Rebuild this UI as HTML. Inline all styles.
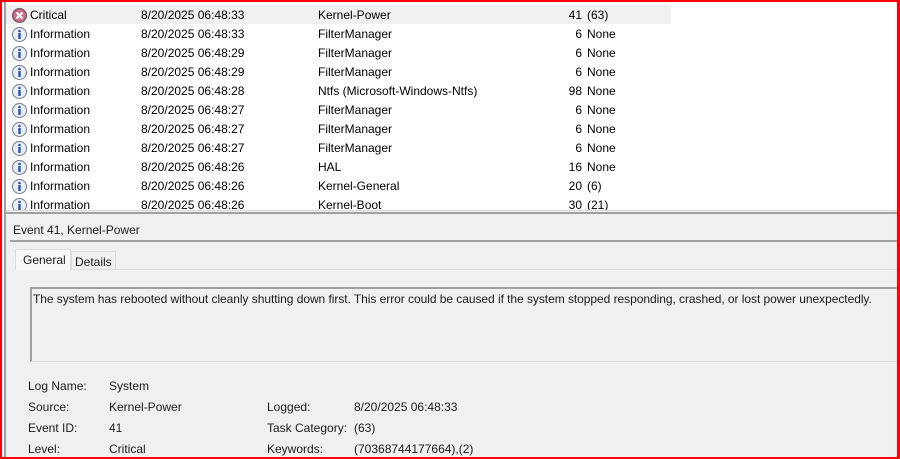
<!DOCTYPE html>
<html><head><style>
*{margin:0;padding:0;box-sizing:border-box}
body{width:900px;height:459px;overflow:hidden;background:#fff;font-family:"Liberation Sans",sans-serif;font-size:12px;color:#000;position:relative}
.frame{position:absolute;left:0;top:0;width:900px;height:459px;border:2px solid #f00;border-right-width:3px;z-index:10;pointer-events:none}
.vl{position:absolute;left:4px;top:0;width:2px;height:459px;background:#a0a0a0}
.list{position:absolute;left:6px;top:2px;width:891px;height:208px;background:#fff;overflow:hidden}
.row{position:absolute;left:0;height:19px;width:665px;line-height:19px;white-space:nowrap}
.row.sel{background:#f0f0f0}
.row span{position:absolute;top:0}
.ic{position:absolute;left:6px;top:2px;width:15px;height:15px}
.bot{position:absolute;left:6px;top:210px;width:894px;height:247px;background:#f0f0f0;border-top:1px solid #d8d8d8}
.bot:before{content:"";position:absolute;left:0;top:1px;width:100%;height:2px;background:#a0a0a0}
.ab{position:absolute;white-space:nowrap;color:#1a1a1a}
</style></head><body>
<div class="vl"></div>
<div class="list">
<div class="row sel" style="top:3px;line-height:21px"><svg class="ic" viewBox="0 0 15 15" style="top:3px"><circle cx="7.5" cy="7.5" r="7" fill="#b85a78" stroke="#6d5a6a"/><circle cx="7.5" cy="7.5" r="5.5" fill="#c9768e"/><path d="M4.5 4.5l6 6M10.5 4.5l-6 6" stroke="#fff" stroke-width="2"/></svg><span style="left:24px">Critical</span><span style="left:135px">8/20/2025 06:48:33</span><span style="left:312px">Kernel-Power</span><span style="left:555px;width:21px;text-align:right">41</span><span style="left:581px">(63)</span></div>
</div>
<div class="bot">
<div class="ab" style="left:7px;top:12px">Event 41, Kernel-Power</div>
<div style="position:absolute;left:4px;top:29px;width:890px;height:2px;background:#a0a0a0"></div>
<div style="position:absolute;left:10px;top:58px;width:884px;height:1px;background:#dcdcdc"></div>
<div style="position:absolute;left:9px;top:38px;width:56px;height:21px;background:#f8f8f8;border:1px solid #dcdcdc;border-bottom:none"></div>
<div class="ab" style="left:17px;top:42px">General</div>
<div style="position:absolute;left:65px;top:40px;width:45px;height:19px;border:1px solid #dcdcdc;border-bottom:none"></div>
<div class="ab" style="left:69px;top:44px">Details</div>
<div style="position:absolute;left:24px;top:76px;width:870px;height:75px;border-top:2px solid #a0a0a0;border-left:2px solid #a0a0a0;border-bottom:1px solid #dcdcdc"></div>
<div class="ab" style="left:27px;top:81px;letter-spacing:-0.05px">The system has rebooted without cleanly shutting down first. This error could be caused if the system stopped responding, crashed, or lost power unexpectedly.</div>
<div class="ab" style="left:22px;top:168px">Log Name:</div><div class="ab" style="left:103px;top:168px">System</div>
<div class="ab" style="left:22px;top:189px">Source:</div><div class="ab" style="left:103px;top:189px">Kernel-Power</div>
<div class="ab" style="left:261px;top:189px">Logged:</div><div class="ab" style="left:348px;top:189px">8/20/2025 06:48:33</div>
<div class="ab" style="left:22px;top:210px">Event ID:</div><div class="ab" style="left:103px;top:210px">41</div>
<div class="ab" style="left:261px;top:210px">Task Category:</div><div class="ab" style="left:348px;top:210px">(63)</div>
<div class="ab" style="left:22px;top:231px">Level:</div><div class="ab" style="left:103px;top:231px">Critical</div>
<div class="ab" style="left:261px;top:231px">Keywords:</div><div class="ab" style="left:348px;top:231px">(70368744177664),(2)</div>
</div>
<div class="frame"></div>
<script>
var d=[["06:48:33","FilterManager","6","None"],["06:48:29","FilterManager","6","None"],["06:48:29","FilterManager","6","None"],["06:48:28","Ntfs (Microsoft-Windows-Ntfs)","98","None"],["06:48:27","FilterManager","6","None"],["06:48:27","FilterManager","6","None"],["06:48:27","FilterManager","6","None"],["06:48:26","HAL","16","None"],["06:48:26","Kernel-General","20","(6)"],["06:48:26","Kernel-Boot","30","(21)"]];
var L=document.querySelector('.list'),h='';
d.forEach(function(r,i){h+='<div class="row" style="top:'+(23+19*i)+'px"><svg class="ic" viewBox="0 0 15 15"><circle cx="7.5" cy="7.5" r="7" fill="#e8eef8" stroke="#707a88"/><circle cx="7.5" cy="4" r="1.3" fill="#2a55b0"/><rect x="6.3" y="6" width="2.4" height="6" fill="#2a55b0"/></svg><span style="left:24px">Information</span><span style="left:135px">8/20/2025 '+r[0]+'</span><span style="left:312px">'+r[1]+'</span><span style="left:555px;width:21px;text-align:right">'+r[2]+'</span><span style="left:581px">'+r[3]+'</span></div>'});
L.insertAdjacentHTML('beforeend',h);
</script>
</body></html>
